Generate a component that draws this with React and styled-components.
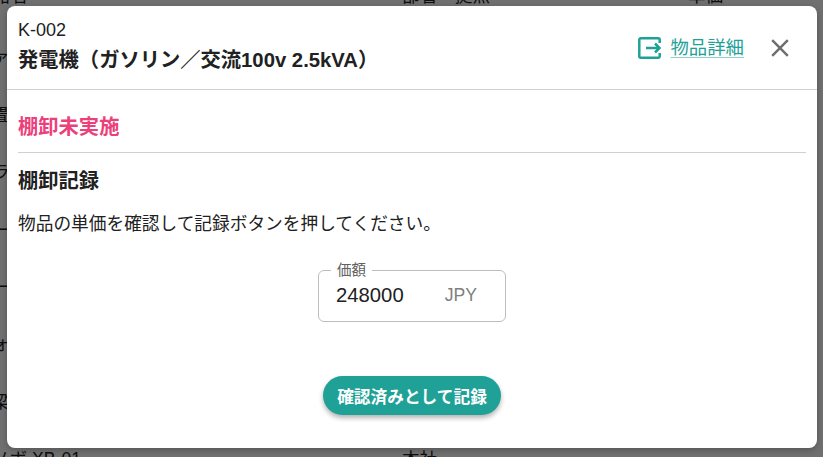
import React from "react";
import styled, { createGlobalStyle } from "styled-components";

const Global = createGlobalStyle`
  html, body { margin: 0; padding: 0; height: 100%; overflow: hidden; }
  body { font-family: "Liberation Sans", "Noto Sans CJK JP", sans-serif; color: #212121; background: #fff; }
`;

const Page = styled.div`
  position: relative;
  width: 823px;
  height: 457px;
  overflow: hidden;
`;

const BackTable = styled.div`
  display: flex;
  flex-direction: column;
  margin-top: -14px;
  margin-left: -8px;
  font-size: 17.6px;
  line-height: 20px;
  color: #212121;
`;

const BackRow = styled.div`
  display: grid;
  grid-template-columns: 410px 286px 1fr;
  height: 57.4px;
  white-space: nowrap;
  &:first-child { height: 61.4px; }
`;

const Backdrop = styled.div`
  position: absolute;
  inset: 0;
  background: rgba(0, 0, 0, 0.56);
`;

const Modal = styled.div`
  position: absolute;
  left: 7px;
  top: 6px;
  width: 810px;
  height: 442px;
  background: #fff;
  border-radius: 8px;
  display: flex;
  flex-direction: column;
  box-shadow: 0 2px 6px rgba(0, 0, 0, 0.25);
`;

const Header = styled.header`
  display: flex;
  align-items: center;
  justify-content: space-between;
  height: 83px;
  padding: 0 25px 0 11px;
  border-bottom: 1px solid #d0d0d0;
`;

const TitleBlock = styled.div`
  display: flex;
  flex-direction: column;
  gap: 7px;
  margin-top: -2px;
`;

const Code = styled.div`
  font-size: 18px;
  line-height: 20px;
`;

const Title = styled.div`
  font-size: 20.3px;
  line-height: 26px;
  font-weight: 700;
`;

const Actions = styled.div`
  display: flex;
  align-items: center;
  gap: 24px;
`;

const DetailLink = styled.a`
  display: flex;
  align-items: center;
  gap: 9px;
  color: #1fa197;
  font-size: 18.4px;
  line-height: 24px;
  margin-top: 1px;
  span {
    text-decoration: underline;
    text-decoration-color: rgba(31, 161, 151, 0.5);
    text-decoration-thickness: 1px;
    text-underline-offset: 3px;
  }
`;

const CloseButton = styled.button`
  display: flex;
  padding: 0;
  border: 0;
  background: none;
  color: #6e6e6e;
`;

const Body = styled.main`
  flex: 1;
  display: flex;
  flex-direction: column;
  padding: 0 11px;
`;

const Status = styled.div`
  box-sizing: border-box;
  height: 63px;
  padding-top: 12px;
  display: flex;
  align-items: center;
  border-bottom: 1px solid #d0d0d0;
  color: #ec407a;
  font-size: 20.3px;
  font-weight: 700;
  line-height: 26px;
`;

const SectionTitle = styled.h2`
  margin: 15px 0 0;
  font-size: 20.3px;
  line-height: 26px;
  font-weight: 700;
`;

const Hint = styled.p`
  margin: 17px 0 0;
  font-size: 17.7px;
  line-height: 26px;
`;

const FieldWrap = styled.div`
  display: flex;
  justify-content: center;
  margin-top: 25px;
`;

const Field = styled.fieldset`
  box-sizing: border-box;
  width: 188px;
  height: 60px;
  margin: 0;
  padding: 0 17px;
  border: 1px solid #bdbdbd;
  border-radius: 6px;
  display: flex;
  align-items: center;
  justify-content: space-between;
`;

const FieldLabel = styled.legend`
  margin-left: -5px;
  padding: 0 6px;
  font-size: 14.5px;
  line-height: 16px;
  color: #616161;
`;

const Amount = styled.span`
  font-size: 20.3px;
  margin-top: -9px;
`;

const Unit = styled.span`
  font-size: 17.6px;
  margin: -9px 11px 0 0;
  color: #808080;
`;

const Footer = styled.div`
  display: flex;
  justify-content: center;
  margin-top: 54px;
`;

const SubmitButton = styled.button`
  height: 39px;
  width: 178px;
  padding: 0;
  border: 0;
  border-radius: 20px;
  background: #1fa197;
  color: #fff;
  font-family: inherit;
  font-size: 16.7px;
  font-weight: 700;
  box-shadow: 0 3px 5px rgba(0, 0, 0, 0.3);
`;

const rows = [
  ["品名", "部署・拠点", "単価"],
  ["ァ", "", ""],
  ["畳", "", ""],
  ["ラ", "", ""],
  ["ー", "", ""],
  ["ー", "", ""],
  ["ォ", "", ""],
  ["梁", "", ""],
  ["ノボ XB-01", "本社", ""],
];

export default function App() {
  return (
    <Page>
      <Global />
      <BackTable>
        {rows.map((r, i) => (
          <BackRow key={i}>
            {r.map((c, j) => (
              <div key={j}>{c}</div>
            ))}
          </BackRow>
        ))}
      </BackTable>
      <Backdrop />
      <Modal>
        <Header>
          <TitleBlock>
            <Code>K-002</Code>
            <Title>発電機（ガソリン／交流100v 2.5kVA）</Title>
          </TitleBlock>
          <Actions>
            <DetailLink>
              <svg width="24" height="24" viewBox="0 0 24 24" fill="none" stroke="currentColor" strokeWidth="2.5">
                <path d="M22.7 7V3.8a1.5 1.5 0 0 0-1.5-1.5H3.8a1.5 1.5 0 0 0-1.5 1.5v16.4a1.5 1.5 0 0 0 1.5 1.5h17.4a1.5 1.5 0 0 0 1.5-1.5V17" />
                <path d="M9 12h13.5M18 7.5l4.5 4.5-4.5 4.5" />
              </svg>
              <span>物品詳細</span>
            </DetailLink>
            <CloseButton aria-label="閉じる">
              <svg width="24" height="24" viewBox="0 0 24 24" fill="currentColor">
                <path d="M19 6.41 17.59 5 12 10.59 6.41 5 5 6.41 10.59 12 5 17.59 6.41 19 12 13.41 17.59 19 19 17.59 13.41 12z" transform="translate(12 12) scale(1.24) translate(-12 -12)" />
              </svg>
            </CloseButton>
          </Actions>
        </Header>
        <Body>
          <Status>棚卸未実施</Status>
          <SectionTitle>棚卸記録</SectionTitle>
          <Hint>物品の単価を確認して記録ボタンを押してください。</Hint>
          <FieldWrap>
            <Field>
              <FieldLabel>価額</FieldLabel>
              <Amount>248000</Amount>
              <Unit>JPY</Unit>
            </Field>
          </FieldWrap>
          <Footer>
            <SubmitButton>確認済みとして記録</SubmitButton>
          </Footer>
        </Body>
      </Modal>
    </Page>
  );
}
